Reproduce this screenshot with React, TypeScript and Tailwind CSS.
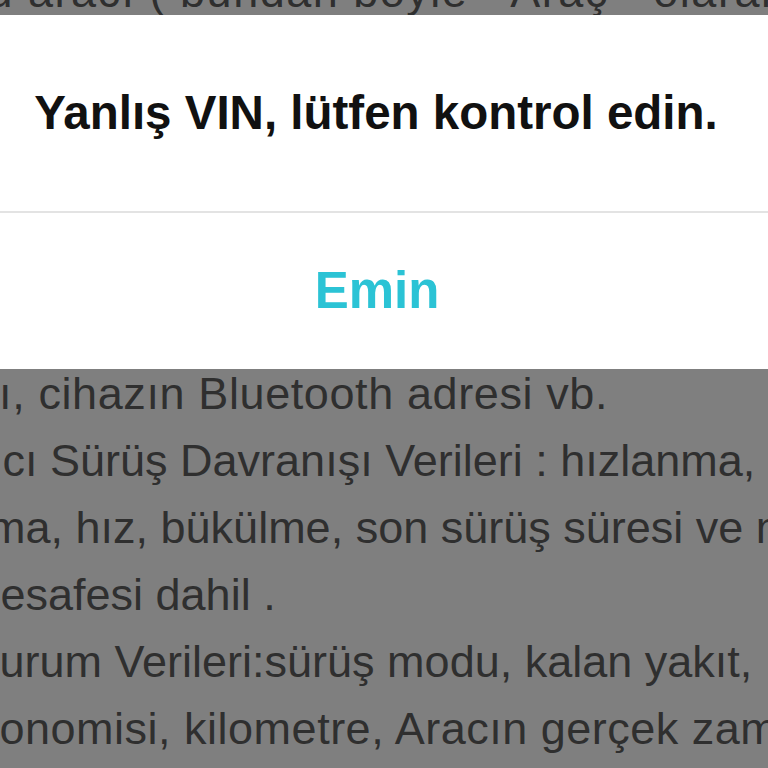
import React from 'react';

const lines: { text: string; shift: string }[] = [
  { text: 'Bu aracı ( bundan böyle “ Araç ” olarak anılacaktır )', shift: '-ml-[44px] tracking-[1.5px]' },
  { text: 'kullanarak sağladığımız hizmetler için aşağıdaki', shift: '-ml-[2px]' },
  { text: 'bilgileri toplayabiliriz: Araç Tanımlama Verileri :', shift: '-ml-[2px]' },
  { text: 'araç şasi numarası (VIN), plaka numarası, araç', shift: '-ml-[2px]' },
  { text: 'modeli, üretim yılı, motor tipi, yazılım sürümü,', shift: '-ml-[2px]' },
  { text: 'cihazın seri numarası, cihazın MAC adresi, cihaz', shift: '-ml-[2px]' },
  { text: 'sı, cihazın Bluetooth adresi vb.', shift: '-ml-[24px] tracking-[0.6px]' },
  { text: 'ıcı Sürüş Davranışı Verileri : hızlanma,', shift: '-ml-[10px]' },
  { text: 'ma, hız, bükülme, son sürüş süresi ve m', shift: '-ml-[12px]' },
  { text: 'mesafesi dahil .', shift: '-ml-[37px]' },
  { text: 'Durum Verileri:sürüş modu, kalan yakıt,', shift: '-ml-[33px]' },
  { text: 'ekonomisi, kilometre, Aracın gerçek zamanlı', shift: '-ml-[49px] tracking-[0.5px]' },
];

const App: React.FC = () => {
  return (
    <div className="relative h-[768px] w-[768px] overflow-hidden bg-[#7f7f7f] font-['Liberation_Sans',Arial,sans-serif]">
      {/* Page text behind the overlay */}
      <div className="-mt-[42px] text-[45px] leading-[67px] text-[#2f2f2f]">
        {lines.map((line, i) => (
          <div key={i} className={`whitespace-nowrap ${line.shift}`}>
            {line.text}
          </div>
        ))}
      </div>

      {/* Alert dialog */}
      <div className="absolute -left-[20px] -right-[20px] top-[15px] flex h-[354px] flex-col bg-white">
        <div className="flex h-[196px] items-center justify-center pr-[16px]">
          <p className="text-[47.5px] font-bold text-[#111111]">Yanlış VIN, lütfen kontrol edin.</p>
        </div>
        <div className="h-[2px] bg-[#e3e3e3]" />
        <button className="flex flex-1 items-center justify-center pr-[14px]">
          <span className="text-[51px] font-bold text-[#2bc3d5]">Emin</span>
        </button>
      </div>
    </div>
  );
};

export default App;
